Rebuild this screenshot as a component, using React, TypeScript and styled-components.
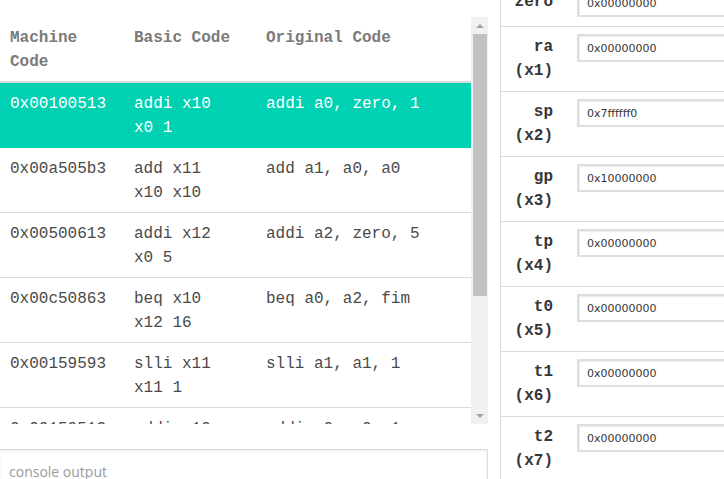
import React, { useLayoutEffect, useRef } from "react";
import styled, { createGlobalStyle } from "styled-components";

const GlobalStyle = createGlobalStyle`
  html, body {
    margin: 0;
    padding: 0;
    background: #fff;
    overflow: hidden;
  }
`;

const Page = styled.div`
  display: flex;
  height: 479px;
  width: 724px;
  overflow: hidden;
`;

const LeftPane = styled.div`
  width: 488px;
  flex: none;
  padding-top: 17px;
  display: flex;
  flex-direction: column;
  gap: 25px;
`;

const CodeFrame = styled.div`
  display: flex;
  height: 407px;
  flex: none;
`;

const CodeScroll = styled.div`
  flex: 1;
  overflow: hidden;
`;

/* classic scrollbar next to the code list */
const ScrollTrack = styled.div`
  width: 17px;
  flex: none;
  background: #f1f1f1;
  display: flex;
  flex-direction: column;
  align-items: center;
`;

const ScrollButton = styled.div<{ $down?: boolean }>`
  height: 17px;
  width: 17px;
  display: flex;
  align-items: center;
  justify-content: center;
  &::after {
    content: "";
    border-left: 4px solid transparent;
    border-right: 4px solid transparent;
    ${(p) =>
      p.$down
        ? "border-top: 4px solid #a3a3a3;"
        : "border-bottom: 4px solid #a3a3a3;"}
  }
`;

const ScrollThumb = styled.div`
  width: 14px;
  height: 262px;
  background: #c1c1c1;
`;

const ScrollRest = styled.div`
  flex: 1;
`;

const Table = styled.table`
  width: 100%;
  border-collapse: collapse;
  table-layout: fixed;
  font-family: "Liberation Mono", "Courier New", monospace;
  font-size: 16px;
  line-height: 24px;
`;

const HeadCell = styled.th<{ $w?: number }>`
  width: ${(p) => (p.$w ? `${p.$w}px` : "auto")};
  text-align: left;
  vertical-align: top;
  font-weight: bold;
  color: #7a7a7a;
  padding: 9px 14px 7px 10px;
  border-bottom: 2px solid #dbdbdb;
`;

const Row = styled.tr<{ $selected?: boolean }>`
  background: ${(p) => (p.$selected ? "#00d1b2" : "#fff")};
  color: ${(p) => (p.$selected ? "#fff" : "#4a4a4a")};
  & > td {
    border-bottom: 1px solid ${(p) => (p.$selected ? "#00d1b2" : "#dbdbdb")};
  }
`;

const Cell = styled.td`
  vertical-align: top;
  padding: 9px 14px 7px 10px;
`;

const ConsoleBox = styled.textarea`
  flex: none;
  box-sizing: border-box;
  height: 64px;
  margin: 0;
  resize: none;
  border: 1px solid #dbdbdb;
  border-left: none;
  border-radius: 0;
  box-shadow: inset 0 1px 2px rgba(10, 10, 10, 0.08);
  padding: 12px 9px 8px;
  font-family: "Open Sans", "Liberation Sans", sans-serif;
  font-size: 14px;
  line-height: 20px;
  color: #4a4a4a;
  outline: none;
  &::placeholder {
    color: #9a9a9a;
  }
`;

const RegPane = styled.div`
  margin-left: 12px;
  width: 300px;
  flex: none;
  height: 479px;
  overflow: hidden;
  border-left: 1px solid #dbdbdb;
`;

const RegRow = styled.div`
  display: grid;
  grid-template-columns: 61px 1fr;
  align-items: start;
  border-bottom: 1px solid #dbdbdb;
`;

const RegName = styled.div`
  padding: 8px 9px 8px 12px;
  text-align: right;
  font-family: "Liberation Mono", "Courier New", monospace;
  font-weight: bold;
  font-size: 16px;
  line-height: 24px;
  color: #363636;
`;

const RegInputWrap = styled.div`
  padding: 7px 0 9px 15px;
`;

const RegInput = styled.input`
  display: block;
  box-sizing: border-box;
  width: 220px;
  height: 28px;
  margin: 0;
  padding: 0 8px;
  border: 2px solid #dedede;
  border-radius: 0;
  box-shadow: inset 1px 1px 1px rgba(10, 10, 10, 0.08);
  font-family: "DejaVu Sans", Verdana, sans-serif;
  font-size: 11px;
  color: #363636;
  background: #fff;
  outline: none;
`;

const program = [
  ["0x00100513", "addi x10 x0 1", "addi a0, zero, 1"],
  ["0x00a505b3", "add x11 x10 x10", "add a1, a0, a0"],
  ["0x00500613", "addi x12 x0 5", "addi a2, zero, 5"],
  ["0x00c50863", "beq x10 x12 16", "beq a0, a2, fim"],
  ["0x00159593", "slli x11 x11 1", "slli a1, a1, 1"],
  ["0x00150513", "addi x10 x10 1", "addi a0, a0, 1"],
  ["0xff5ff06f", "jal x0 -12", "j loop"],
  ["0x00000013", "addi x0 x0 0", "nop"],
];

const regs: [string, string][] = [
  ["zero", "0x00000000"],
  ["ra (x1)", "0x00000000"],
  ["sp (x2)", "0x7ffffff0"],
  ["gp (x3)", "0x10000000"],
  ["tp (x4)", "0x00000000"],
  ["t0 (x5)", "0x00000000"],
  ["t1 (x6)", "0x00000000"],
  ["t2 (x7)", "0x00000000"],
  ["s0 (x8)", "0x00000000"],
  ["s1 (x9)", "0x00000000"],
];

export default function App() {
  const regRef = useRef<HTMLDivElement>(null);

  useLayoutEffect(() => {
    if (regRef.current) regRef.current.scrollTop = 18;
  }, []);

  return (
    <>
      <GlobalStyle />
      <Page>
        <LeftPane>
          <CodeFrame>
            <CodeScroll>
              <Table>
                <thead>
                  <tr>
                    <HeadCell $w={100}>Machine Code</HeadCell>
                    <HeadCell $w={100} style={{ paddingRight: 22 }}>
                      Basic Code
                    </HeadCell>
                    <HeadCell>Original Code</HeadCell>
                  </tr>
                </thead>
                <tbody>
                  {program.map(([mc, basic, orig], i) => (
                    <Row key={mc} $selected={i === 0}>
                      <Cell>{mc}</Cell>
                      <Cell style={{ paddingRight: 22 }}>{basic}</Cell>
                      <Cell>{orig}</Cell>
                    </Row>
                  ))}
                </tbody>
              </Table>
            </CodeScroll>
            <ScrollTrack>
              <ScrollButton />
              <ScrollThumb />
              <ScrollRest />
              <ScrollButton $down />
            </ScrollTrack>
          </CodeFrame>
          <ConsoleBox placeholder="console output" readOnly />
        </LeftPane>
        <RegPane ref={regRef}>
          {regs.map(([name, val]) => (
            <RegRow key={name}>
              <RegName>{name}</RegName>
              <RegInputWrap>
                <RegInput defaultValue={val} readOnly />
              </RegInputWrap>
            </RegRow>
          ))}
        </RegPane>
      </Page>
    </>
  );
}
